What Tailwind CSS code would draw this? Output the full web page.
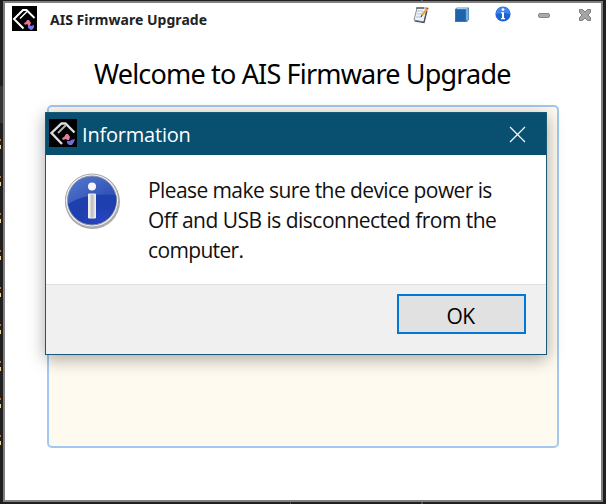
<!DOCTYPE html>
<html lang="en">
<head>
<meta charset="utf-8">
<title>AIS Firmware Upgrade</title>
<script src="https://cdn.jsdelivr.net/npm/@tailwindcss/browser@4"></script>
</head>
<body class="relative h-[504px] w-[606px] overflow-hidden bg-[#1f1f20] pt-px pl-[3px]">
<svg class="absolute top-0 left-0" width="606" height="504">
  <defs>
    <pattern id="marks" width="3" height="37" patternUnits="userSpaceOnUse" y="139"><path d="M0 0h1v2h-1z" fill="#b87542"/><path d="M0 6h1v4h-1z" fill="#e8d295"/></pattern>
  </defs>
  <path d="M0 86h3v37h-3z" fill="#363637"/>
  <path d="M0 139h3v307h-3z" fill="url(#marks)"/>
  <path d="M290 501h1v3h-1zM421 501h2v3h-2zM421 0h2v1h-2z" fill="#505050"/>
</svg>
<main class="relative flex h-[501px] w-[600px] flex-col border-2 border-[#808080] bg-white">
  <header class="flex h-[50px] items-start justify-between pt-[3px] pr-[8px] pl-[7px]">
    <div class="flex">
      <svg class="block" width="25" height="25" viewBox="0 0 25 25">
        <rect width="25" height="25" fill="#000"/>
        <path d="M22.500 12 14.500 4H11L2 13 11.500 22.500" fill="none" stroke="#fff" stroke-width="2"/><path d="M15 5.500 8 12.500" fill="none" stroke="#fff" stroke-width="1.500"/>
        <path d="M12 17l2-1 1-2h2l2 3-1 2h-2l-1-1-2 1z" fill="#f0709c"/><path d="M16 19h2l1 1 3-1v2l-1 2-2 1-3-2z" fill="#7773f4"/>
      </svg>
      <h1 class="ml-[13px] pt-[4px] font-['Noto_Sans'] text-[14px] leading-[20px] font-bold tracking-[0.03px] whitespace-nowrap text-[#222]">AIS Firmware Upgrade</h1>
    </div>
    <div class="flex gap-[25px]">
      <svg width="16" height="18" viewBox="0 0 16 18">
        <path d="M4 2h10l-3 14-10-2z" fill="#edf3fa" stroke="#84909c"/><path d="M1.500 15l9.500 1.500 3-12" fill="none" stroke="#3d4b57" stroke-width="1.200"/><path d="M4 5h6M4 8h5M3 11h5" stroke="#b4c1d0"/><path d="M4 1v2M6 1v2M8 1v2M10 1v2" stroke="#333"/><path d="M14 3 9 9" stroke="#eda23c" stroke-width="2"/><path d="M15 2l-1 1" stroke="#b84747" stroke-width="2"/><path d="M9 9l-1 2" stroke="#222"/>
      </svg>
      <svg width="16" height="18" viewBox="0 0 16 18">
        <path d="M1 3 3 1.500h12v12L13 16H1z" fill="#5993c9"/><path d="M3 2.500h10" stroke="#a9cbe7"/><path d="M1.500 3.500h10.500v12H1.500z" fill="#1f63ac" stroke="#3779b7"/><path d="M13 3v11" stroke="#a8cee9"/>
      </svg>
      <svg width="16" height="18" viewBox="0 0 16 18">
        <circle cx="8" cy="8" r="7.600" fill="#2263d4"/><path d="M1 8a7 7 0 0 1 14 0q-7-2-14 0z" fill="#4184ec"/><circle cx="8" cy="3.600" r="1.400" fill="#fff"/><path d="M6 6.200h3v5.800h1v1.200H6V12h1V7.500H6z" fill="#fff"/>
      </svg>
      <svg width="16" height="18" viewBox="0 0 16 18"><rect x="2.500" y="7.500" width="11" height="4" rx="1.500" fill="#aaa" stroke="#888"/></svg>
      <svg width="16" height="18" viewBox="0 0 16 18"><path d="M2.500 3.500h3l2.500 2.500 2.500-2.500h3v3L11 9l2.500 2.500v3h-3L8 12l-2.500 2.500h-3v-3L5 9 2.500 6.500z" fill="#a5a5a5" stroke="#7f7f7f" stroke-linejoin="round"/></svg>
    </div>
  </header>
  <h2 class="mt-px pl-[89px] font-['Noto_Sans'] text-[27px] leading-[40px] font-normal tracking-[-0.82px] whitespace-nowrap text-black">Welcome to AIS Firmware Upgrade</h2>
  <div class="mt-[11px] ml-[42px] h-[343px] w-[512px] rounded-[5px] border-2 border-[#a3c8f0] bg-[#fffaef]"></div>
</main>
<section role="dialog" class="absolute top-[112px] left-[45px] flex h-[243px] w-[502px] flex-col border border-[#1a5878] bg-white shadow-[0_4px_16px_rgba(0,0,0,0.34)]">
  <div class="flex h-[42px] shrink-0 items-center bg-[#084f70] pl-[3px] pr-[20px]">
    <svg class="-mt-[2px]" width="28" height="28" viewBox="0 0 28 28">
      <rect width="28" height="28" fill="#000"/>
      <path d="M25.500 13.500 16.500 4.500H12.500L2.500 14 13 25" fill="none" stroke="#ddd" stroke-width="2.400"/><path d="M17 6 9 14" fill="none" stroke="#b8b8b8" stroke-width="1.800"/>
      <path d="M13 19l2-1 2-3h2l2 3-1 3h-2l-1-1-3 1z" fill="#e57b9d"/><path d="M18 22h3l1-1 4-1-1 3-2 3h-3l-2-2z" fill="#736bdd"/>
    </svg>
    <div class="ml-[5px] pt-px font-['Open_Sans'] text-[20px] leading-[28px] tracking-[-0.2px] whitespace-nowrap text-white">Information</div>
    <svg class="ml-auto" width="17" height="17" viewBox="0 0 17 17"><path d="M1 1l15 15M16 1 1 16" stroke="#fff" stroke-width="1.200"/></svg>
  </div>
  <div class="flex h-[129px] shrink-0 pt-[18px] pl-[18px]">
    <svg width="58" height="58" viewBox="0 0 58 58">
      <defs><linearGradient id="ball" x2=".6" y2="1"><stop stop-color="#567bd0"/><stop offset="1" stop-color="#1e3eaa"/></linearGradient><linearGradient id="bar"><stop stop-color="#fff"/><stop offset=".5" stop-color="#bbb"/><stop offset="1" stop-color="#eee"/></linearGradient><radialGradient id="low" cx=".7" cy=".9"><stop stop-color="#2745c5"/><stop offset="1" stop-color="#1e3fae"/></radialGradient></defs>
      <circle cx="28.500" cy="28.500" r="27.500" fill="#aaa"/><circle cx="28" cy="27.500" r="26.500" fill="#f3f3f3" stroke="#aaa"/><circle cx="28" cy="27.500" r="24.500" fill="url(#ball)" stroke="#8e96a8"/><path d="M4 31Q22 19 52 22A24 24 0 0 1 4 31z" fill="url(#low)"/><circle cx="28" cy="13.500" r="4" fill="#f7f7f7"/><path d="M24.500 21h7v24h-7z" fill="url(#bar)" stroke="#eee"/>
    </svg>
    <p class="ml-[26px] pt-[2px] font-['Open_Sans'] text-[21px] leading-[30px] whitespace-nowrap text-[#111]"><span class="block tracking-[-0.59px]">Please make sure the device power is</span><span class="block tracking-[-0.51px]">Off and USB is disconnected from the</span><span class="block tracking-[-0.65px]">computer.</span></p>
  </div>
  <div class="flex grow items-start justify-end border-t border-[#dfdfdf] bg-[#f0f0f0] pt-[9px] pr-[20px]">
    <button class="h-[40px] w-[129px] border-2 border-[#0078d7] bg-[#e1e1e1] pt-[3px] pr-[2px] font-['Open_Sans'] text-[21px] leading-[32px] tracking-[-0.5px] text-black">OK</button>
  </div>
</section>
</body>
</html>
